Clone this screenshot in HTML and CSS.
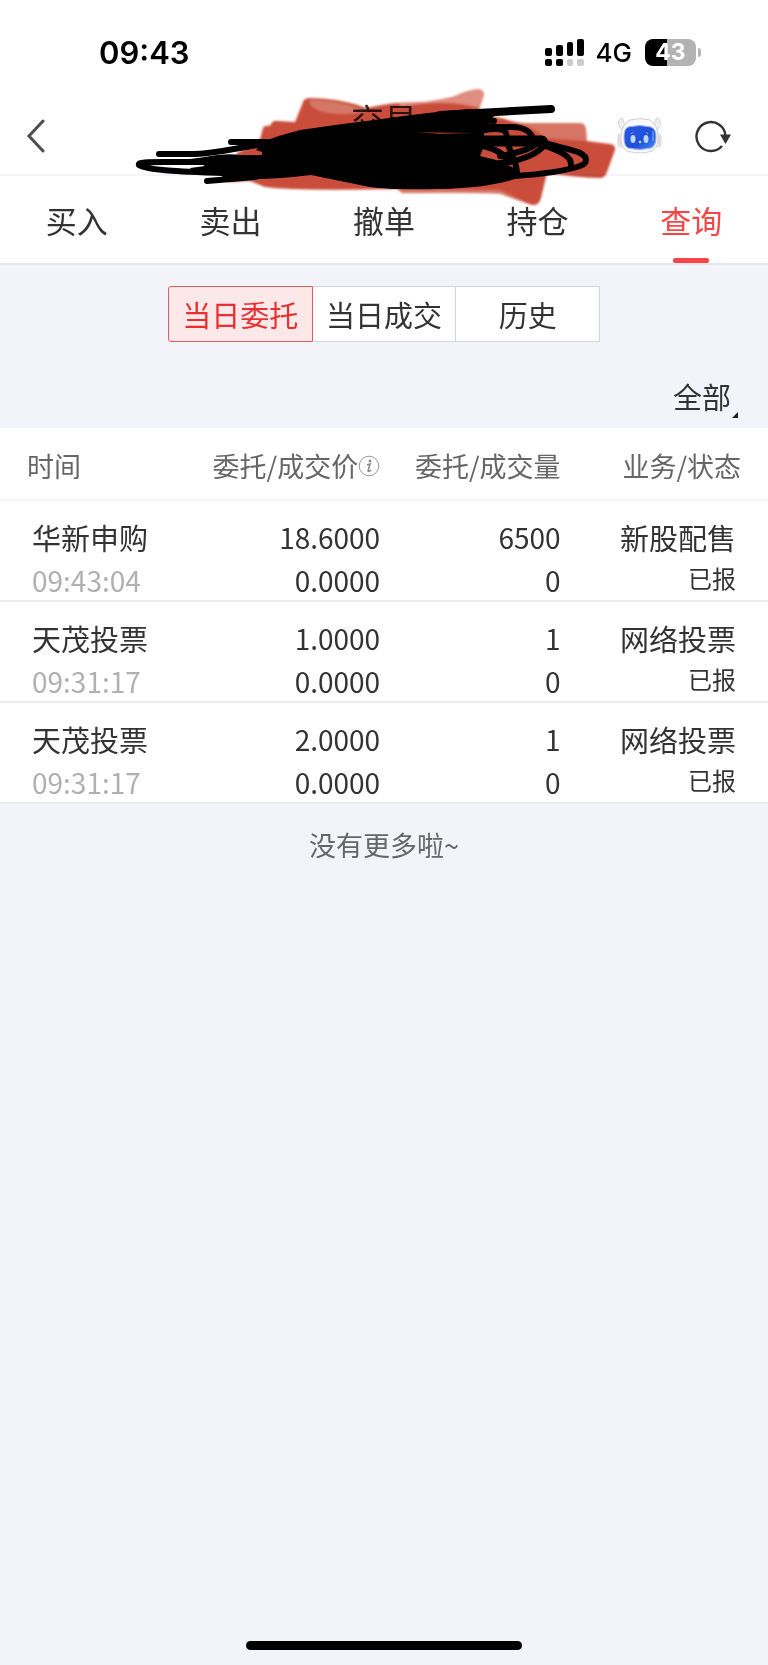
FILE: index.html
```html
<!DOCTYPE html>
<html lang="zh-CN">
  <head>
    <meta charset="utf-8" />
    <meta name="viewport" content="width=device-width, initial-scale=1" />
    <title>交易</title>
    <link rel="stylesheet" href="styles.css" />
  </head>
  <body>
    <div class="status-bar">
      <span class="clock">09:43</span>
      <div class="status-right">
        <svg class="signal" viewBox="0 0 40 28" aria-hidden="true">
          <rect x="0" y="9" width="7" height="8" rx="2" />
          <rect x="11" y="6" width="7" height="11" rx="2" />
          <rect x="22" y="3" width="6" height="14" rx="2" />
          <rect x="32" y="0" width="7" height="17" rx="2" />
          <rect x="0" y="20" width="7" height="7" rx="2" />
          <rect x="11" y="20" width="7" height="7" rx="2" />
          <rect x="22" y="20" width="6" height="7" rx="2" fill="#ccc" />
          <rect x="32" y="20" width="7" height="7" rx="2" fill="#ccc" />
        </svg>
        <span class="network">4G</span>
        <span class="battery">43</span>
        <span class="battery-cap"></span>
      </div>
    </div>

    <header class="header">
      <button class="icon-btn back" aria-label="返回">
        <svg width="20" height="34" viewBox="0 0 20 34">
          <path d="M17 2 L3 17 L17 32" fill="none" stroke="#4d4d4d" stroke-width="3" stroke-linecap="round" />
        </svg>
      </button>
      <h1 class="title">交易</h1>
      <div class="actions">
        <button class="icon-btn" aria-label="智能助手">
          <svg width="46" height="38" viewBox="0 0 46 38">
            <defs>
              <linearGradient id="face" x1="0" y1="0" x2="1" y2="1">
                <stop offset="0" stop-color="#2b55e0" />
                <stop offset="0.6" stop-color="#1f50dc" />
                <stop offset="1" stop-color="#4b8cf8" />
              </linearGradient>
            </defs>
            <g fill="#f0f1f3" stroke="#cfd1d5" stroke-width="1">
              <path d="M7 14 C2 11 0 6 3 2 C5 0 7 2 6 4 C6 7 9 8 13 7 Z" />
              <path d="M38 14 C43 11 45 6 42 2 C40 0 38 2 39 4 C39 7 36 8 32 7 Z" />
              <rect x="1" y="17" width="6" height="13" rx="3" />
              <rect x="38" y="17" width="6" height="13" rx="3" />
              <path d="M13 3 Q23 0 33 3 Q40 7 41 18 Q42 30 35 34 Q23 38 10 34 Q3 30 4 18 Q5 7 13 3 Z" fill="#f8f8fa" />
            </g>
            <path d="M3 19v9M42 19v9" stroke="#f0bdb9" stroke-width="1" />
            <path d="M11 10 Q23 7 34 10 Q39 12 39 20 Q39 29 34 31 Q23 34 11 31 Q7 29 7 20 Q7 12 11 10 Z" fill="url(#face)" stroke="#9bb4ee" stroke-width="1" />
            <ellipse cx="16" cy="22" rx="2.500" ry="4" fill="#b9d8fb" />
            <ellipse cx="29" cy="22" rx="2.500" ry="4" fill="#b9d8fb" />
            <path d="M14 17l2-2M29 15l2 2M36 14v10" stroke="#89b2ff" stroke-width="1" />
            <circle cx="23" cy="25" r="1.200" fill="#cfe6ff" />
          </svg>
        </button>
        <button class="icon-btn" aria-label="刷新">
          <svg width="36" height="34" viewBox="0 0 36 34">
            <path d="M27 27 A14.500 14.500 0 1 1 30.500 17" fill="none" stroke="#333" stroke-width="2.400" />
            <path d="M25 15.500 H36 L30.500 25 Z" fill="#333" />
          </svg>
        </button>
      </div>
      <svg class="scribble" viewBox="124 80 520 130" aria-hidden="true">
        <defs>
          <filter id="soft"><feGaussianBlur stdDeviation="0.9" /></filter>
        </defs>
        <g filter="url(#soft)">
          <path fill="#ca4e3a" d="M303 102 Q304 98 310 98 Q340 98 366 108 Q395 101 425 102 L453 97 Q468 90 477 89 Q484 89 484 95 L478 113 L505 119 Q515 123 525 123 H580 Q585 123 586 129 L587 141 L610 144 Q616 145 615 150 L607 172 Q605 178 600 178 Q580 178 547 173 L541 198 Q539 206 532 205 Q516 200 501 194 Q485 192 402 193 L397 189 Q290 191 265 187 L250 181 L228 182 L237 153 L259 143 L263 128 Q264 125 270 126 Q272 120 278 121 L295 122 Z" />
          <path fill="#e09a8e" opacity="0.55" d="M310 100 Q340 100 366 111 Q340 117 320 111 Q308 106 310 100 Z" />
          <path fill="#f3cdc6" opacity="0.5" d="M400 103 L452 98 Q470 90 477 89 Q484 89 484 95 L480 108 Q445 98 400 107 Z" />
          <path fill="#f0c0b8" opacity="0.35" d="M515 123 H580 Q585 123 586 129 L587 141 L545 138 Q530 124 515 123 Z" />
          <path fill="#f0c0b8" opacity="0.35" d="M397 189 L500 190 L528 203 L500 194 H402 Z" />
        </g>
        <path d="M190 159 L205 157 Q225 153 240 155 L262 155 L262 152 L256 150 L262 142 Q280 135 300 130 Q340 124 382 119 Q430 112 470 109 L494 116 L484 130 L484 146 L480 156 L500 161 L514 168 L518 178 Q490 188 440 189 Q390 190 370 187 Q340 181 311 175 Q270 180 240 179 L210 183 L225 175 L195 173 L190 168 L205 166 Z" />
        <g fill="none" stroke="#000" stroke-width="6" stroke-linecap="round" stroke-linejoin="round">
          <path d="M231 142 H275" />
          <path d="M159 154 H195 C220 153 240 147 270 143" />
          <path d="M250 162 H165 C148 162 137 162 139 165 C148 171 190 172 250 174" />
          <path d="M207 181 L255 177" />
          <path d="M440 115 L551 109" stroke-width="8" />
          <path d="M430 117 L494 121" />
          <path d="M420 127 H512 C524 127 531 132 533 139" />
          <path d="M474 135 Q482 129 496 129 C507 129 507 133 507 143 C511 152 516 160 517 172" />
          <path d="M450 141 L542 141" stroke-width="11" />
          <path d="M546 143 C562 148 574 150 580 153 C588 157 588 163 580 166 C565 171 545 174 515 176" />
          <path d="M540 144 C560 151 572 156 571 165" />
          <path d="M535 145 C528 150 518 153 500 156 M545 145 C535 156 520 161 500 163" />
          <path d="M474 144 C496 148 504 154 510 162" />
        </g>
        <path d="M417 132 L474 133 L440 134 Z" fill="#8c3024" />
      </svg>
    </header>

    <nav class="tabs">
      <a href="#buy">买入</a>
      <a href="#sell">卖出</a>
      <a href="#cancel">撤单</a>
      <a href="#position">持仓</a>
      <a href="#query" class="active">查询</a>
    </nav>

    <div class="filters">
      <div class="segments">
        <button class="selected">当日委托</button>
        <button>当日成交</button>
        <button>历史</button>
      </div>
      <div class="type-filter">
        <select aria-label="业务类型">
          <option>全部</option>
        </select>
        <span class="corner"></span>
      </div>
    </div>

    <table class="orders">
      <thead>
        <tr>
          <th>时间</th>
          <th>
            <span class="with-info">委托/成交价<svg width="22" height="22" viewBox="0 0 22 22" aria-hidden="true">
              <circle cx="11" cy="11" r="9.800" fill="none" stroke="#999" stroke-width="1" />
              <circle cx="12" cy="6" r="1.400" fill="#888" />
              <path d="M9 10 L12 9 L10 16 Q11 17 13 15" fill="none" stroke="#888" stroke-width="1.500" />
            </svg></span>
          </th>
          <th>委托/成交量</th>
          <th>业务/状态</th>
        </tr>
      </thead>
      <tbody>
        <tr>
          <td><div class="name">华新申购</div><div class="num time">09:43:04</div></td>
          <td><div class="num">18.6000</div><div class="num">0.0000</div></td>
          <td><div class="num">6500</div><div class="num">0</div></td>
          <td><div class="name">新股配售</div><div class="state">已报</div></td>
        </tr>
        <tr>
          <td><div class="name">天茂投票</div><div class="num time">09:31:17</div></td>
          <td><div class="num">1.0000</div><div class="num">0.0000</div></td>
          <td><div class="num">1</div><div class="num">0</div></td>
          <td><div class="name">网络投票</div><div class="state">已报</div></td>
        </tr>
        <tr>
          <td><div class="name">天茂投票</div><div class="num time">09:31:17</div></td>
          <td><div class="num">2.0000</div><div class="num">0.0000</div></td>
          <td><div class="num">1</div><div class="num">0</div></td>
          <td><div class="name">网络投票</div><div class="state">已报</div></td>
        </tr>
      </tbody>
    </table>

    <p class="no-more">没有更多啦~</p>

    <div class="home-indicator"></div>
  </body>
</html>
```
FILE: styles.css
```css
* {
  box-sizing: border-box;
}
body {
  margin: 0;
  min-height: 100vh;
  display: flex;
  flex-direction: column;
  background-color: #f3f4f9;
  color: #333;
  font-family: "Noto Sans CJK SC", sans-serif;
}
button,
select {
  font-family: inherit;
  color: inherit;
  border: none;
  padding: 0;
  margin: 0;
  background: none;
}

/* status bar */
.status-bar {
  display: flex;
  justify-content: space-between;
  align-items: center;
  height: 97px;
  padding: 8px 67px 0 99px;
  background-color: #fff;
  color: #000;
  font-family: Inter, sans-serif;
}
.clock {
  font-size: 31px;
  font-weight: 600;
}
.status-right {
  display: flex;
  align-items: center;
}
.signal {
  width: 40px;
  height: 28px;
}
.network {
  margin: 0 13px 0 11px;
  font-size: 26px;
  font-weight: 500;
}
.battery {
  width: 51px;
  height: 27px;
  border-radius: 8px;
  background: linear-gradient(90deg, #000 44%, #b3b3b3 44%);
  color: #fff;
  font-size: 23px;
  font-weight: 700;
  line-height: 27px;
  text-align: center;
}
.battery-cap {
  width: 3px;
  height: 9px;
  margin-left: 2px;
  border-radius: 0 4px 4px 0;
  background-color: #b3b3b3;
}

/* header */
.header {
  position: relative;
  display: grid;
  grid-template-columns: 1fr auto 1fr;
  align-items: center;
  height: 79px;
  padding: 0 26px;
  background-color: #fff;
  border-bottom: 2px solid #f4f4f9;
}
.icon-btn svg {
  display: block;
}
.back {
  justify-self: start;
}
.title {
  align-self: start;
  margin: 0;
  font-size: 33px;
  font-weight: 400;
  line-height: 44px;
}
.actions {
  display: flex;
  align-items: center;
  justify-content: flex-end;
  gap: 32px;
  padding-right: 11px;
}
.scribble {
  position: absolute;
  z-index: 1;
  top: -17px;
  left: 50%;
  width: 520px;
  height: 130px;
  margin-left: -260px;
  mix-blend-mode: multiply;
  pointer-events: none;
}

/* tabs */
.tabs {
  display: flex;
  height: 89px;
  background-color: #fff;
  border-bottom: 2px solid #e6e6f0;
}
.tabs a {
  flex: 1;
  display: flex;
  flex-direction: column;
  align-items: center;
  justify-content: space-between;
  padding-top: 22px;
  color: #333;
  font-size: 31px;
  line-height: 44px;
  text-decoration: none;
}
.tabs .active {
  color: #fa4545;
}
.tabs .active::after {
  content: "";
  width: 36px;
  height: 5px;
  border-radius: 2px;
  background-color: #fa4545;
}

/* filters */
.filters {
  height: 163px;
  padding: 21px 30px 0;
}
.segments {
  display: flex;
  width: 432px;
  margin: 0 auto;
}
.segments button {
  flex: 1;
  height: 56px;
  background-color: #fff;
  border: 1px solid #d2d4d6;
  border-left: none;
  font-size: 29px;
  line-height: 40px;
}
.segments .selected {
  color: #e93030;
  background-color: #fce8e9;
  border: 1px solid #e55a5c;
  border-radius: 3px 0 0 3px;
}
.type-filter {
  display: flex;
  justify-content: flex-end;
  align-items: flex-end;
  margin-top: 32px;
}
.type-filter select {
  appearance: none;
  height: 44px;
  font-size: 29px;
  line-height: 44px;
}
.corner {
  width: 6px;
  height: 6px;
  background-color: #222;
  clip-path: polygon(100% 0, 100% 100%, 0 100%);
}

/* orders table */
.orders {
  width: 100%;
  table-layout: fixed;
  border-collapse: separate;
  border-spacing: 0;
  background-color: #fff;
}
.orders th {
  height: 73px;
  padding: 4px 0 0;
  border-bottom: 2px solid #f5f5f8;
  color: #666;
  font-size: 27px;
  font-weight: 400;
  line-height: 40px;
  text-align: right;
  white-space: nowrap;
}
.orders th:nth-child(1) {
  width: 25%;
  padding-left: 27px;
  text-align: left;
}
.orders th:nth-child(2) {
  width: 24.5%;
}
.orders th:nth-child(3) {
  width: 23.5%;
}
.orders th:nth-child(4) {
  width: 27%;
  padding-right: 27px;
}
.with-info {
  display: inline-flex;
  align-items: center;
}
.orders td {
  height: 101px;
  padding: 12px 0 0;
  border-bottom: 2px solid #ebebf3;
  text-align: right;
  vertical-align: top;
  white-space: nowrap;
}
.orders td:first-child {
  padding-left: 32px;
  text-align: left;
}
.orders td:last-child {
  padding-right: 32px;
}
.name,
.num {
  font-size: 29px;
  line-height: 48px;
}
.num {
  font-size: 28px;
}
.num:last-child {
  line-height: 39px;
}
.time {
  color: #b0b0b0;
}
.state {
  font-size: 24px;
  line-height: 34px;
}

.no-more {
  margin: 21px 0 0;
  color: #666;
  font-size: 27px;
  line-height: 40px;
  text-align: center;
}
.home-indicator {
  width: 36%;
  height: 9px;
  margin: auto auto 15px;
  border-radius: 5px;
  background-color: #000;
}
```
